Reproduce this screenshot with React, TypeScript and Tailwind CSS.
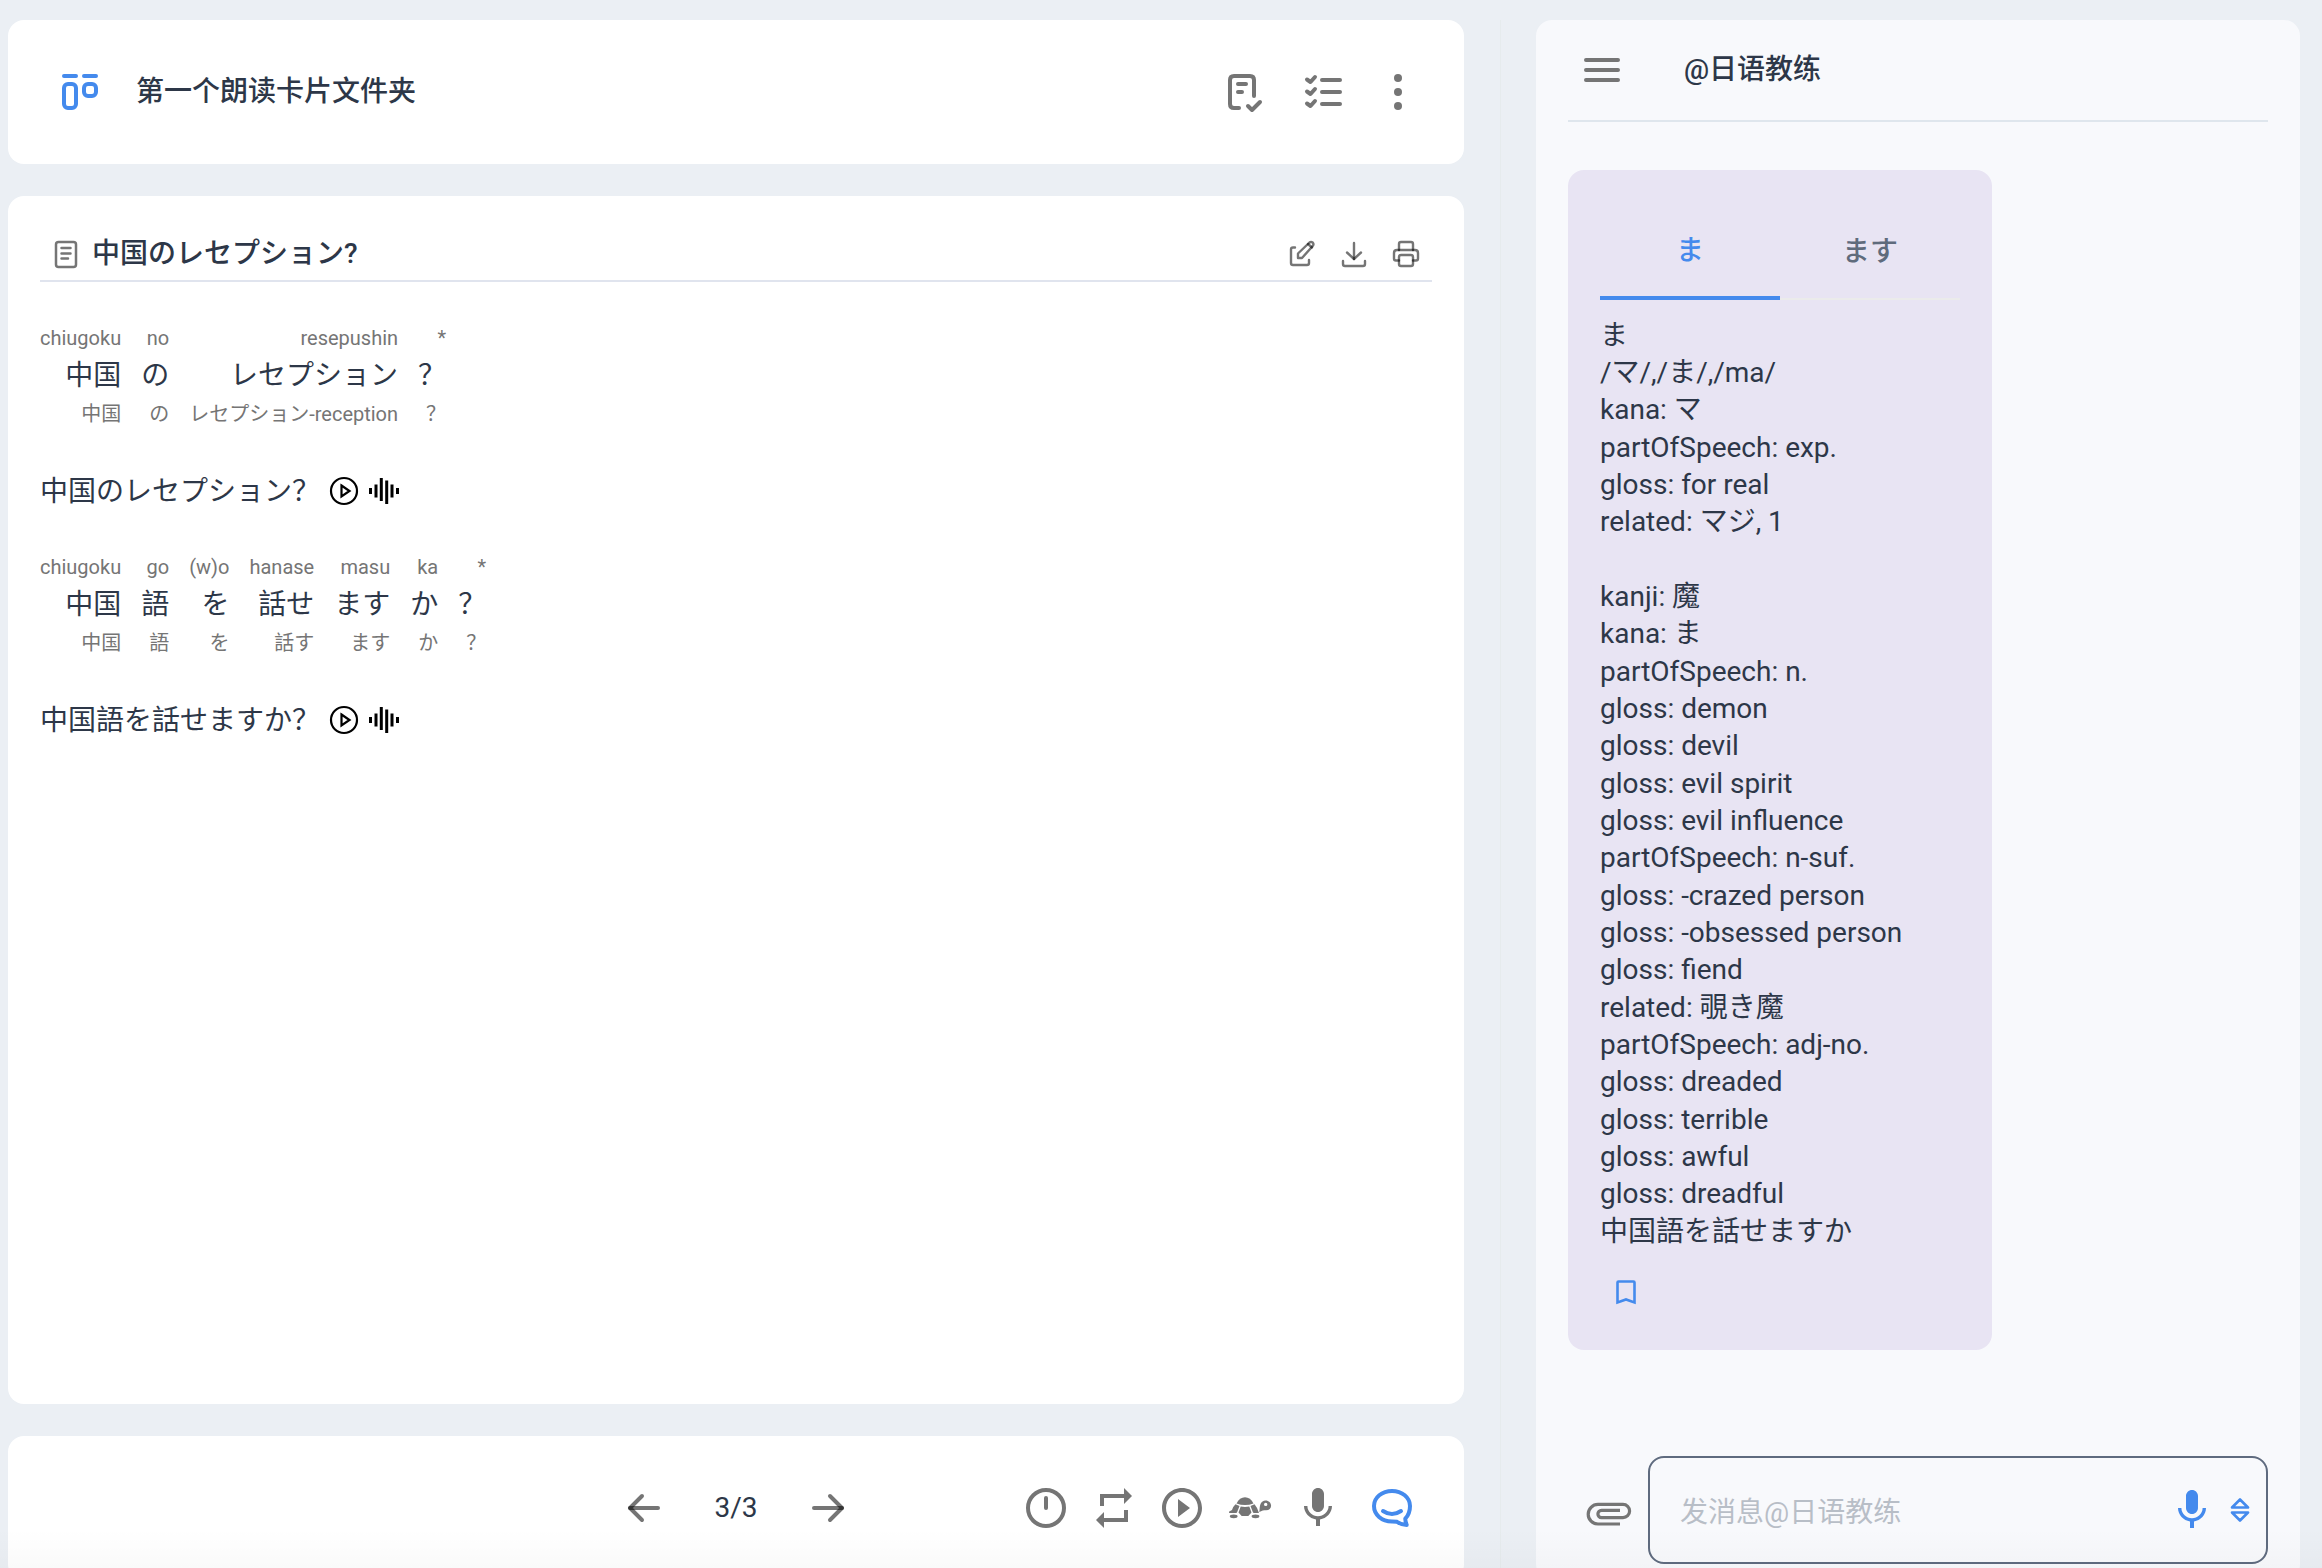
import React from "react";
import type { ReactNode } from "react";

type IconProps = { size?: number; children: ReactNode };

function Icon({ size = 48, children }: IconProps) {
  return (
    <svg
      width={size}
      height={size}
      viewBox={`0 0 ${size} ${size}`}
      fill="none"
      strokeLinecap="round"
      strokeLinejoin="round"
      aria-hidden="true"
    >
      {children}
    </svg>
  );
}

function SolidIcon({ d }: { d: string }) {
  return (
    <svg width={48} height={48} viewBox="0 0 24 24" fill="currentColor" aria-hidden="true">
      <path d={d} />
    </svg>
  );
}

const MIC =
  "M12 14c1.66 0 2.99-1.34 2.99-3L15 5c0-1.66-1.34-3-3-3S9 3.34 9 5v6c0 1.66 1.34 3 3 3zm5.3-3c0 3-2.54 5.1-5.3 5.1S6.7 14 6.7 11H5c0 3.41 2.72 6.23 6 6.72V21h2v-3.28c3.28-.48 6-3.3 6-6.72h-1.7z";
const REPEAT = "M7 7h10v3l4-4-4-4v3H5v6h2V7zm10 10H7v-3l-4 4 4 4v-3h12v-6h-2v4z";
const PLAY =
  "M10 16.5l6-4.5-6-4.5v9zM12 2C6.48 2 2 6.48 2 12s4.48 10 10 10 10-4.48 10-10S17.52 2 12 2zm0 18c-4.41 0-8-3.59-8-8s3.59-8 8-8 8 3.59 8 8-3.59 8-8 8z";

function BoardIcon() {
  return (
    <Icon>
      <g stroke="#448aed" strokeWidth={4}>
        <path d="M8 8h12M28 8h12" />
        <rect x={8} y={16} width={12} height={24} rx={4} />
        <rect x={28} y={16} width={12} height={12} rx={4} />
      </g>
    </Icon>
  );
}

function NoteCheckIcon() {
  return (
    <Icon>
      <g stroke="#757575" strokeWidth={4}>
        <path d="M17 40h-5q-4 0-4-4V12q0-4 4-4h16q4 0 4 4v16" />
        <path d="M16 16h8M16 24h4M26 38l4 4 8-8" />
      </g>
    </Icon>
  );
}

function ChecklistIcon() {
  return (
    <Icon>
      <g stroke="#757575" strokeWidth={4}>
        <path d="M24 12h18M24 24h18M24 36h18" />
        <path d="M9 11.500l3.500 2.500 4.500-5M9 23.500l3.500 2.500 4.500-5M9 35.500l3.500 2.500 4.500-5" />
      </g>
    </Icon>
  );
}

function DotsIcon() {
  return (
    <Icon>
      <g fill="#757575">
        <circle cx={24} cy={10} r={4} />
        <circle cx={24} cy={24} r={4} />
        <circle cx={24} cy={38} r={4} />
      </g>
    </Icon>
  );
}

function NoteIcon() {
  return (
    <Icon size={36}>
      <g stroke="#757575" strokeWidth={2.500}>
        <rect x={8} y={6} width={20} height={25} rx={2.500} />
        <path d="M13.500 12h9M13.500 17.500h9M13.500 22.500h6.500" />
      </g>
    </Icon>
  );
}

function EditIcon() {
  return (
    <Icon size={36}>
      <g stroke="#000" strokeOpacity={0.54} strokeWidth={2.400}>
        <path d="M11 11.500H9q-2 0-2 2V27q0 2 2 2h14q2 0 2-2v-3" />
        <path d="M14 22v-4.500L25.500 6.500q1.500-1.200 3.200 0 1.500 1.700 0 3.500L18 22z" />
        <path d="M24 8l4 3.500" />
      </g>
    </Icon>
  );
}

function DownloadIcon() {
  return (
    <Icon size={36}>
      <g stroke="#000" strokeOpacity={0.54} strokeWidth={2.400}>
        <path d="M18 7v16" />
        <path d="M11 16.500l7 6.500 7-6.500" />
        <path d="M7 25v3q0 2 2 2h18q2 0 2-2v-3" />
      </g>
    </Icon>
  );
}

function PrinterIcon() {
  return (
    <Icon size={36}>
      <g stroke="#000" strokeOpacity={0.54} strokeWidth={2.400}>
        <path d="M11 14V8q0-2 2-2h10q2 0 2 2v6" />
        <path d="M11 24.500H8q-2 0-2-2V17q0-3 3-3h18q3 0 3 3v5.500q0 2-2 2h-3" />
        <rect x={11} y={19} width={14} height={11} rx={2} />
      </g>
    </Icon>
  );
}

function SpeakIcon() {
  return (
    <Icon size={32}>
      <circle cx={16} cy={15} r={13} stroke="#000" strokeWidth={2.200} />
      <path d="M13.500 9.500l8 5.500-8 5.500z" stroke="#000" strokeWidth={2.200} strokeLinejoin="miter" />
    </Icon>
  );
}

function WaveIcon() {
  return (
    <Icon size={32}>
      <path
        d="M2.500 12v6M8 8.500v13M13.300 2v23M18.700 4.500v23.500M24 8.500v13M29.500 12v6"
        stroke="#000"
        strokeWidth={3}
        strokeLinecap="butt"
      />
    </Icon>
  );
}

function ArrowIcon({ right = false }: { right?: boolean }) {
  return (
    <Icon>
      <g stroke="#000" strokeOpacity={0.54} strokeWidth={4}>
        <path d="M10 24h28" />
        <path d={right ? "M26 12l12 12-12 12" : "M22 12L10 24l12 12"} />
      </g>
    </Icon>
  );
}

function TimerIcon() {
  return (
    <Icon>
      <circle cx={24} cy={24} r={18} stroke="#757575" strokeWidth={4} />
      <path d="M24 14v10" stroke="#757575" strokeWidth={4} />
    </Icon>
  );
}

function TurtleIcon() {
  return (
    <Icon>
      <g fill="#757575">
        <path d="M10.500 19.500C12.500 15.500 15.500 13.300 19 13.300s6.500 2.200 8.500 6.200Q19 22.500 10.500 19.500z" />
        <path d="M14.700 22.500q4.300.8 8.600 0l2.200 6-3.200 3.500h-6.600l-3.200-3.500z" />
        <path d="M9.500 20.300l4 1.800-2.300 6q-.3.900-1.200.9H3.500q-1-.3-.3-1.500L6 26q1.200-3.700 3.500-5.700z" />
        <path d="M28.500 20.300l-4 1.800 2.300 6q.3.900 1.200.9h5Q31 23 28.500 20.300z" />
        <ellipse cx={7.700} cy={32.300} rx={3.900} ry={1.900} />
        <ellipse cx={29.500} cy={32.300} rx={3.900} ry={1.900} />
        <path
          fillRule="evenodd"
          d="M33.300 28c.4-3.300.3-6 1.200-8 1-2.400 2.800-3.600 5-3.600 3.200 0 5.600 2.300 5.600 5.200 0 3.200-2 4.700-5 4.700-2 0-4.500.4-6.800 1.700zM39.700 18.700a1.700 1.700 0 1 0 0 3.400 1.700 1.700 0 1 0 0-3.400z"
        />
      </g>
    </Icon>
  );
}

function ChatIcon() {
  return (
    <Icon>
      <g stroke="#448aed" strokeWidth={4}>
        <path d="M24 7C14 7 6 13.500 6 22s7.500 15.500 18 15.500c1.800 0 3.500 0 5 .3 3 2 6 3.200 9.700 3.200-.7-2-1.500-4-1.400-6.300C40.300 31.500 42 27 42 22 42 13.500 34 7 24 7z" />
        <path d="M15 27q9 6 18 0" />
      </g>
    </Icon>
  );
}

function MenuIcon() {
  return (
    <Icon>
      <path d="M8 14h32M8 24h32M8 34h32" stroke="#757575" strokeWidth={4} />
    </Icon>
  );
}

function BookmarkIcon() {
  return (
    <Icon size={36}>
      <path
        d="M9.500 28.500V8.500q0-1 1-1h15q1 0 1 1v20L18 25.500z"
        stroke="#448aed"
        strokeWidth={2.600}
        strokeLinejoin="miter"
      />
    </Icon>
  );
}

function ClipIcon() {
  return (
    <Icon>
      <path
        d="M36 34H14a9.800 9.800 0 0 1 0-19.600H39a6.600 6.600 0 0 1 0 13.200H17.500a3.600 3.600 0 0 1 0-7.200H36"
        stroke="#757575"
        strokeWidth={3.200}
        strokeLinecap="butt"
      />
    </Icon>
  );
}

function SortIcon() {
  return (
    <Icon size={24}>
      <path d="M4 9.500L12 1.500l8 8z" stroke="#448aed" strokeWidth={2.600} />
      <path d="M4 14.500l8 8 8-8z" stroke="#448aed" strokeWidth={2.600} />
    </Icon>
  );
}

function IconButton({ label, className, children }: { label: string; className: string; children: ReactNode }) {
  return (
    <button type="button" aria-label={label} className={`flex shrink-0 items-center justify-center ${className}`}>
      {children}
    </button>
  );
}

type Token = [string, string, string];

const sentences: { text: string; tokens: Token[] }[] = [
  {
    text: "中国のレセプション？",
    tokens: [
      ["chiugoku", "中国", "中国"],
      ["no", "の", "の"],
      ["resepushin", "レセプション", "レセプション-reception"],
      ["*", "？", "？"],
    ],
  },
  {
    text: "中国語を話せますか？",
    tokens: [
      ["chiugoku", "中国", "中国"],
      ["go", "語", "語"],
      ["(w)o", "を", "を"],
      ["hanase", "話せ", "話す"],
      ["masu", "ます", "ます"],
      ["ka", "か", "か"],
      ["*", "？", "？"],
    ],
  },
];

const entry = [
  "ま",
  "/マ/,/ま/,/ma/",
  "kana: マ",
  "partOfSpeech: exp.",
  "gloss: for real",
  "related: マジ, 1",
  "",
  "kanji: 魔",
  "kana: ま",
  "partOfSpeech: n.",
  "gloss: demon",
  "gloss: devil",
  "gloss: evil spirit",
  "gloss: evil influence",
  "partOfSpeech: n-suf.",
  "gloss: -crazed person",
  "gloss: -obsessed person",
  "gloss: fiend",
  "related: 覗き魔",
  "partOfSpeech: adj-no.",
  "gloss: dreaded",
  "gloss: terrible",
  "gloss: awful",
  "gloss: dreadful",
  "中国語を話せますか",
];

function FolderHeader() {
  return (
    <header className="flex h-36 shrink-0 items-center justify-between rounded-2xl bg-white pr-[42px] pl-12">
      <div className="flex items-center gap-8">
        <BoardIcon />
        <h1 className="font-medium">第一个朗读卡片文件夹</h1>
      </div>
      <div className="flex items-center gap-7">
        <IconButton label="笔记" className="size-12"><NoteCheckIcon /></IconButton>
        <IconButton label="清单" className="size-12"><ChecklistIcon /></IconButton>
        <IconButton label="更多" className="size-12"><DotsIcon /></IconButton>
      </div>
    </header>
  );
}

function ReadingCard() {
  return (
    <main className="flex-1 rounded-2xl bg-white p-8">
      <div className="flex h-[54px] items-center justify-between border-b-2 border-[#e0e4ee] px-2">
        <div className="flex items-center gap-2">
          <NoteIcon />
          <h2 className="font-medium">中国のレセプション?</h2>
        </div>
        <div className="flex items-center gap-4">
          <IconButton label="编辑" className="size-9"><EditIcon /></IconButton>
          <IconButton label="下载" className="size-9"><DownloadIcon /></IconButton>
          <IconButton label="打印" className="size-9"><PrinterIcon /></IconButton>
        </div>
      </div>
      {sentences.map((s) => (
        <section key={s.text} className="pt-[38px]">
          <div className="flex gap-5">
            {s.tokens.map(([romaji, word, base], i) => (
              <div key={i} className="text-right">
                <p className="text-xl leading-[37px] text-[#757575]">{romaji}</p>
                <p className="leading-[38px]">{word}</p>
                <p className="text-xl leading-[38px] text-[#757575]">{base}</p>
              </div>
            ))}
          </div>
          <div className="flex items-center gap-2 pt-10">
            <p className="leading-[38px]">{s.text}</p>
            <IconButton label="播放" className="size-8"><SpeakIcon /></IconButton>
            <IconButton label="波形" className="size-8"><WaveIcon /></IconButton>
          </div>
        </section>
      ))}
    </main>
  );
}

function PlayerBar() {
  return (
    <footer className="grid h-36 shrink-0 grid-cols-[1fr_auto_1fr] items-center rounded-2xl bg-white px-[42px]">
      <nav className="col-start-2 flex items-center gap-[46px]">
        <IconButton label="上一张" className="size-12"><ArrowIcon /></IconButton>
        <span>3/3</span>
        <IconButton label="下一张" className="size-12"><ArrowIcon right /></IconButton>
      </nav>
      <div className="flex items-center justify-end gap-5 text-[#757575]">
        <IconButton label="计时" className="size-12"><TimerIcon /></IconButton>
        <IconButton label="循环" className="size-12"><SolidIcon d={REPEAT} /></IconButton>
        <IconButton label="播放全部" className="size-12"><SolidIcon d={PLAY} /></IconButton>
        <IconButton label="慢速" className="size-12"><TurtleIcon /></IconButton>
        <IconButton label="录音" className="size-12"><SolidIcon d={MIC} /></IconButton>
        <IconButton label="聊天" className="h-12 w-[60px]"><ChatIcon /></IconButton>
      </div>
    </footer>
  );
}

function ChatPanel() {
  return (
    <aside className="flex min-w-0 flex-col rounded-2xl bg-[#f8f9fc] px-8 pb-4">
      <header className="flex h-[102px] shrink-0 items-center gap-[58px] border-b-2 border-[#dfe6ed] pl-2.5">
        <IconButton label="菜单" className="size-12"><MenuIcon /></IconButton>
        <h2 className="font-medium">@日语教练</h2>
      </header>
      <article className="mt-12 w-fit rounded-2xl bg-[#e8e4f3] p-8">
        <div role="tablist" className="grid grid-cols-[180px_180px] font-medium">
          <button type="button" role="tab" aria-selected="true" className="h-[98px] border-b-4 border-[#448aed] pt-1 text-[#448aed]">
            ま
          </button>
          <button type="button" role="tab" aria-selected="false" className="h-[98px] border-b-2 border-[#ebebeb] pt-1 text-[#5f6b7c]">
            ます
          </button>
        </div>
        <div className="mt-[17px]">
          {entry.map((line, i) => (
            <p key={i} className={i % 3 === 2 ? "h-[38px] leading-[38px]" : "h-[37px] leading-[37px]"}>
              {line}
            </p>
          ))}
        </div>
        <IconButton label="收藏" className="mt-4 size-13"><BookmarkIcon /></IconButton>
      </article>
      <form className="mt-auto flex items-center gap-4">
        <IconButton label="附件" className="mt-2 ml-4 size-12"><ClipIcon /></IconButton>
        <div className="flex h-[108px] min-w-0 flex-1 items-center rounded-2xl border-2 border-[#5f6b7f] pr-3.5 pl-[30px]">
          <input
            aria-label="发消息"
            placeholder="发消息@日语教练"
            className="min-w-0 flex-1 bg-transparent pt-1.5 outline-none placeholder:text-[#b8bec7]"
          />
          <IconButton label="语音输入" className="size-12 text-[#448aed]"><SolidIcon d={MIC} /></IconButton>
          <IconButton label="展开" className="ml-3 size-6"><SortIcon /></IconButton>
        </div>
      </form>
    </aside>
  );
}

export default function App() {
  return (
    <div
      lang="zh-CN"
      className="relative h-screen overflow-hidden bg-[#ebeff4] font-['Roboto','Noto_Sans_CJK_SC',sans-serif] text-[28px] leading-[38px] text-[#2d3748]"
    >
      <div className="grid h-[calc(100vh+12px)] grid-cols-[364fr_72px_191fr] pt-5 pr-[22px] pl-2">
        <div className="flex min-w-0 flex-col gap-8">
          <FolderHeader />
          <ReadingCard />
          <PlayerBar />
        </div>
        <div className="flex justify-center">
          <div className="w-px bg-[#e6ebed]" />
        </div>
        <ChatPanel />
      </div>
      <div className="pointer-events-none absolute inset-x-0 bottom-0 h-10 bg-linear-to-t from-black/[0.02] to-transparent" />
    </div>
  );
}
